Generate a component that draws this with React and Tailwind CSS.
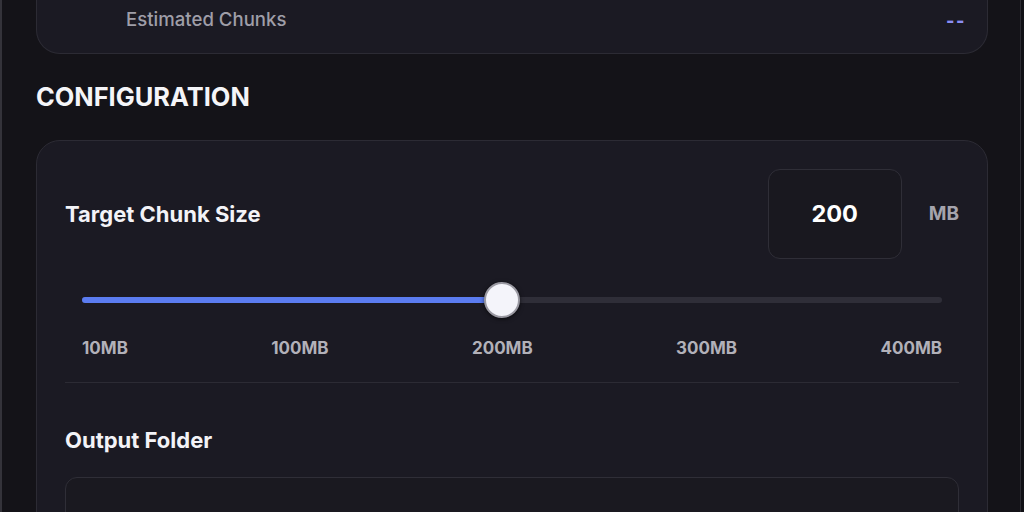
import React, { useState } from 'react';

const ticks = ['10MB', '100MB', '200MB', '300MB', '400MB'];

const App = () => {
  const [size] = useState(200);
  const pct = ((size - 10) / (400 - 10)) * 100;

  return (
    <div className="w-[1024px] h-[512px] overflow-hidden bg-[#111015] flex" style={{ fontFamily: 'Inter, "Noto Sans", sans-serif' }}>
      <div className="w-[1021px] h-full bg-[#141318] border-l-2 border-r border-l-[#34333a] border-r-[#2c2b32] px-[34px] pr-[32px] flex flex-col">
        {/* Summary card (scrolled) */}
        <div className="h-[54px] shrink-0 bg-[#1b1a23] border border-t-0 border-[#2c2b34] rounded-b-3xl flex items-start justify-between pl-[89px] pr-[21px] pt-[7px]">
          <span className="text-[18.6px] font-medium text-[#9f9ea8] leading-6">Estimated Chunks</span>
          <span className="text-[18px] font-extrabold text-[#8a8ef2] leading-6 tracking-[1.5px] pt-[2px]">--</span>
        </div>

        {/* Section title */}
        <h2 className="mt-[27px] text-[25.4px] leading-8 font-bold text-[#f5f5f8]">CONFIGURATION</h2>

        {/* Configuration card */}
        <div className="mt-[27px] bg-[#1b1a23] border border-[#2c2b34] rounded-3xl p-7 flex flex-col">
          <div className="flex items-center">
            <span className="flex-1 text-[22px] font-bold text-[#f3f3f7]">Target Chunk Size</span>
            <div className="w-[134px] h-[90px] rounded-xl border border-[#2f2e37] bg-[#19181f] flex items-center justify-center">
              <span className="text-[23.5px] font-bold text-white">{size}</span>
            </div>
            <span className="ml-[27px] text-[19px] font-bold text-[#a5a4ad]">MB</span>
          </div>

          {/* Slider */}
          <div className="px-[17px] mt-[23px]">
            <div className="relative h-[36px] flex items-center">
              <div className="w-full h-[6px] rounded-full bg-[#2f2e38]">
                <div className="h-full rounded-full bg-[#5b7cf0]" style={{ width: `${pct}%` }} />
              </div>
              <div
                className="absolute top-0 w-[36px] h-[36px] -ml-[18px] rounded-full bg-[#f4f4fa] border-2 border-[#9a99a2] shadow-[0_1px_4px_rgba(0,0,0,0.6)]"
                style={{ left: `${(420 / 860) * 100}%` }}
              />
            </div>
            <div className="mt-[18px] flex justify-between text-[17px] font-bold text-[#b2b1b9]">
              {ticks.map((t) => (
                <span key={t}>{t}</span>
              ))}
            </div>
          </div>

          <div className="mt-[20px] h-px bg-[#2c2b34]" />

          <span className="mt-[41px] text-[22px] font-bold text-[#f3f3f7]">Output Folder</span>
          <div className="mt-[20px] h-[80px] rounded-xl border border-[#2f2e37] bg-[#1a1920]" />
        </div>
      </div>
    </div>
  );
};

export default App;
